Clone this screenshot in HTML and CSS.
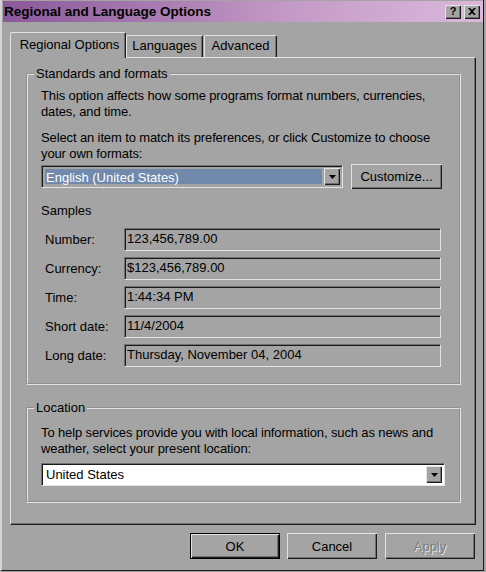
FILE: index.html
```html
<!DOCTYPE html>
<html lang="en">
<head>
  <meta charset="UTF-8" />
  <title>Regional and Language Options</title>
  <link rel="stylesheet" href="styles.css">
</head>
<body>
  <div class="window">
    <div class="titlebar">
      <span class="title">Regional and Language Options</span>
      <div class="caption-btns">
        <span class="cap-btn help">?</span>
        <span class="cap-btn">
          <svg width="8" height="7" viewBox="0 0 8 7"><path d="M0 0h2l2 2 2-2h2L5 3.5 8 7H6L4 5 2 7H0l3-3.5z" fill="#000"/></svg>
        </span>
      </div>
    </div>

    <div class="tabs">
      <div class="tab active">Regional Options</div>
      <div class="tab tab-lang">Languages</div>
      <div class="tab tab-adv">Advanced</div>
    </div>

    <div class="panel">
      <fieldset class="group std">
        <legend>Standards and formats</legend>
        <p class="first">This option affects how some programs format numbers, currencies, dates, and time.</p>
        <p>Select an item to match its preferences, or click Customize to choose your own formats:</p>
        <div class="combo-row">
          <div class="combo combo-lang">
            <span class="combo-text selected">English (United States)</span>
            <span class="drop"><svg width="7" height="4" viewBox="0 0 7 4"><path d="M0 0h7L3.5 4z" fill="#000"/></svg></span>
          </div>
          <button class="btn customize">Customize...</button>
        </div>

        <div class="samples-title">Samples</div>
        <div class="samples">
          <div class="sample"><span class="lbl">Number:</span><div class="field">123,456,789.00</div></div>
          <div class="sample"><span class="lbl">Currency:</span><div class="field">$123,456,789.00</div></div>
          <div class="sample"><span class="lbl">Time:</span><div class="field">1:44:34 PM</div></div>
          <div class="sample"><span class="lbl">Short date:</span><div class="field">11/4/2004</div></div>
          <div class="sample"><span class="lbl">Long date:</span><div class="field">Thursday, November 04, 2004</div></div>
        </div>
      </fieldset>

      <fieldset class="group loc">
        <legend>Location</legend>
        <p class="first">To help services provide you with local information, such as news and weather, select your present location:</p>
        <div class="combo combo-loc">
          <span class="combo-text">United States</span>
          <span class="drop"><svg width="7" height="4" viewBox="0 0 7 4"><path d="M0 0h7L3.5 4z" fill="#000"/></svg></span>
        </div>
      </fieldset>
    </div>

    <div class="buttons">
      <button class="btn default">OK</button>
      <button class="btn">Cancel</button>
      <button class="btn disabled apply">Apply</button>
    </div>
  </div>
</body>
</html>
```

FILE: styles.css
```css
* { box-sizing: border-box; }

body {
  margin: 0;
  background: #a4a4a4;
  font-family: "Liberation Sans", Arial, sans-serif;
  font-size: 13px;
  color: #000;
}

.window {
  width: 484px;
  height: 571px;
  padding-top: 1px;
  background: #a4a4a4;
  border-left: 2px solid #d4d4d4;
  border-right: 1px solid #1a1a1a;
  border-bottom: 1px solid #1a1a1a;
  display: flex;
  flex-direction: column;
}

/* title bar */
.titlebar {
  height: 21px;
  margin: 0 0 0 1px;
  padding: 0 3px 0 1px;
  background: linear-gradient(to right, #8a589a, #c49ac6 60%, #dcb8dc);
  display: flex;
  align-items: center;
  justify-content: space-between;
}

.title {
  font-weight: bold;
  font-size: 13.5px;
  color: #000;
}

.caption-btns {
  display: flex;
  gap: 3px;
}

.cap-btn {
  width: 16px;
  height: 14px;
  background: #a4a4a4;
  box-shadow: inset 1px 1px 0 #e4e4e4, inset -1px -1px 0 #1a1a1a, inset -2px -2px 0 #707070;
  display: flex;
  align-items: center;
  justify-content: center;
  font-weight: bold;
  font-size: 11px;
  line-height: 1;
  padding-bottom: 1px;
}

/* tabs */
.tabs {
  margin-top: 10px;
  padding-left: 8px;
  height: 25px;
  display: flex;
  align-items: flex-end;
}

.tab {
  height: 22px;
  border-top: 1px solid #e4e4e4;
  border-left: 1px solid #e4e4e4;
  border-right: 1px solid #1a1a1a;
  border-radius: 2px 2px 0 0;
  box-shadow: inset -1px 0 0 #707070;
  text-align: center;
  line-height: 20px;
}

.tab.active {
  width: 116px;
  height: 26px;
  margin-bottom: -1px;
  padding-left: 3px;
  line-height: 24px;
  background: #a4a4a4;
  position: relative;
  z-index: 1;
}

.tab-lang { width: 77px; }
.tab-adv { width: 73px; margin-left: 1px; }

/* property page */
.panel {
  margin-left: 8px;
  width: 466px;
  height: 468px;
  padding: 8px 14px 0 15px;
  border-top: 1px solid #e4e4e4;
  border-left: 1px solid #e4e4e4;
  border-right: 1px solid #1a1a1a;
  border-bottom: 1px solid #1a1a1a;
  box-shadow: inset -1px -1px 0 #707070;
}

.group {
  margin: 0;
  min-width: 0;
  padding: 0 13px 16px 13px;
  border: 2px groove #e4e4e4;
}

.group legend {
  margin-left: -7px;
  padding: 0 2px;
  line-height: 15px;
}

.loc {
  margin-top: 15px;
  padding-bottom: 15px;
}

.group p {
  margin: 10px 0 0;
  line-height: 16px;
  letter-spacing: -0.12px;
}

.group p.first { margin-top: 7px; }
.loc p.first { margin-top: 10px; }

.combo-row {
  margin-top: 2px;
  display: flex;
  align-items: center;
  gap: 8px;
}

/* combo boxes */
.combo {
  height: 23px;
  padding: 2px;
  border-top: 1px solid #707070;
  border-left: 1px solid #707070;
  border-right: 1px solid #e4e4e4;
  border-bottom: 1px solid #e4e4e4;
  box-shadow: inset 1px 1px 0 #1a1a1a;
  display: flex;
  align-items: stretch;
}

.combo-lang { width: 302px; }

.combo-loc {
  margin-top: 6px;
  width: 404px;
  background: #fff;
}

.combo-text {
  flex: 1;
  margin-left: 1px;
  padding-left: 1px;
  line-height: 17px;
}

.combo-text.selected {
  margin: 1px 2px 1px 1px;
  background: #7189ab;
  color: #fff;
}

.drop {
  width: 16px;
  background: #a4a4a4;
  box-shadow: inset 1px 1px 0 #e4e4e4, inset -1px -1px 0 #1a1a1a, inset -2px -2px 0 #707070;
  display: flex;
  align-items: center;
  justify-content: center;
}

/* push buttons */
.btn {
  height: 25px;
  padding: 0;
  border: none;
  background: #a4a4a4;
  font-family: inherit;
  font-size: 13px;
  color: #000;
  box-shadow: inset 1px 1px 0 #e4e4e4, inset -1px -1px 0 #1a1a1a, inset -2px -2px 0 #707070;
}

.customize { width: 91px; }

/* samples */
.samples-title {
  margin-top: 14px;
  line-height: 16px;
}

.samples {
  margin-top: 9px;
  display: flex;
  flex-direction: column;
  gap: 6px;
}

.sample {
  display: flex;
  align-items: center;
}

.lbl {
  width: 83px;
  padding-left: 4px;
}

.field {
  width: 317px;
  height: 23px;
  padding-left: 2px;
  line-height: 20px;
  border-top: 1px solid #707070;
  border-left: 1px solid #707070;
  border-right: 1px solid #e4e4e4;
  border-bottom: 1px solid #e4e4e4;
  box-shadow: inset 1px 1px 0 #1a1a1a;
}

/* dialog buttons */
.buttons {
  margin-top: 8px;
  padding-right: 8px;
  display: flex;
  justify-content: flex-end;
  gap: 7px;
}

.buttons .btn {
  width: 90px;
  height: 26px;
}

.btn.default {
  border: 1px solid #000;
}

.apply { margin-left: 1px; }

.btn.disabled {
  color: #7c7c7c;
  text-shadow: 1px 1px 0 #e4e4e4;
}
```
